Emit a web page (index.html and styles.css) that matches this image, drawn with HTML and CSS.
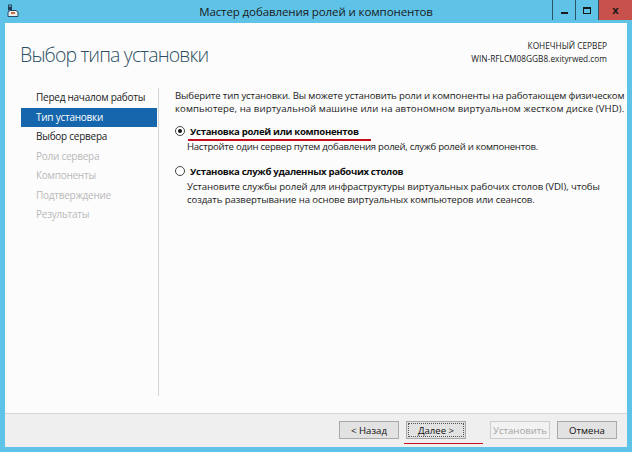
FILE: index.html
```html
<!DOCTYPE html>
<html lang="ru">
<head>
<meta charset="utf-8">
<title>Мастер добавления ролей и компонентов</title>
<link rel="stylesheet" href="styles.css">
</head>
<body>
<div class="window">
  <div class="titlebar">
    <svg class="app-icon" width="12" height="14" viewBox="0 0 12 14">
      <rect x="1" y="0.5" width="4" height="6" fill="#1e3e5a"/>
      <rect x="1.8" y="1.5" width="2.4" height="1" fill="#9fd6f0"/>
      <path d="M1 8 L3 6.5 H9 L11 8 V12.5 H1 Z" fill="#e8eef2" stroke="#2a4a66" stroke-width="1"/>
      <rect x="4" y="8" width="4" height="2" fill="#c86a3a"/>
    </svg>
    <div class="title">Мастер добавления ролей и компонентов</div>
    <div class="caption-buttons">
      <div class="cbtn cmin"><span class="min-glyph"></span></div>
      <div class="cbtn cmax"><span class="max-glyph"></span></div>
      <div class="cbtn cclose">x</div>
    </div>
  </div>
  <div class="client">
    <div class="main">
      <div class="header">
        <h1 class="page-title">Выбор типа установки</h1>
        <div class="server">
          <div class="server-label">КОНЕЧНЫЙ СЕРВЕР</div>
          <div class="server-name">WIN-RFLCM08GGB8.exityrwed.com</div>
        </div>
      </div>
      <div class="body">
        <ul class="nav">
          <li class="nav-item">Перед началом работы</li>
          <li class="nav-item active">Тип установки</li>
          <li class="nav-item">Выбор сервера</li>
          <li class="nav-item disabled">Роли сервера</li>
          <li class="nav-item disabled">Компоненты</li>
          <li class="nav-item disabled">Подтверждение</li>
          <li class="nav-item disabled">Результаты</li>
        </ul>
        <div class="content">
          <p class="intro"><span class="line i1">Выберите тип установки. Вы можете установить роли и компоненты на работающем физическом</span><span class="line i2">компьютере, на виртуальной машине или на автономном виртуальном жестком диске (VHD).</span></p>
          <div class="option">
            <div class="option-head"><span class="radio checked"></span><span class="option-label underlined">Установка ролей или компонентов</span></div>
            <p class="option-desc"><span class="line d1">Настройте один сервер путем добавления ролей, служб ролей и компонентов.</span></p>
          </div>
          <div class="option second">
            <div class="option-head"><span class="radio"></span><span class="option-label l2">Установка служб удаленных рабочих столов</span></div>
            <p class="option-desc"><span class="line d2">Установите службы ролей для инфраструктуры виртуальных рабочих столов (VDI), чтобы</span><span class="line d3">создать развертывание на основе виртуальных компьютеров или сеансов.</span></p>
          </div>
        </div>
      </div>
    </div>
    <div class="footer">
      <button class="btn">&lt; Назад</button>
      <button class="btn focused"><span class="focus-ring">Далее &gt;</span></button>
      <button class="btn disabled-btn">Установить</button>
      <button class="btn">Отмена</button>
    </div>
  </div>
</div>
</body>
</html>
```
FILE: styles.css
```css
* { box-sizing: border-box; }
html, body { margin: 0; padding: 0; }
body {
  width: 632px;
  height: 452px;
  background: #5fc3e8;
  font-family: "Open Sans", "Noto Sans", "DejaVu Sans", sans-serif;
  color: #1b1b1b;
  overflow: hidden;
}
.window {
  display: flex;
  flex-direction: column;
  height: 452px;
}
.titlebar {
  height: 23px;
  display: flex;
  align-items: flex-start;
  position: relative;
  flex: none;
}
.app-icon {
  margin: 4px 0 0 7px;
}
.title {
  position: absolute;
  left: 0;
  right: 0;
  top: 4px;
  text-align: center;
  font-size: 11.5px;
  color: #1a1a1a;
  letter-spacing: -0.1px;
}
.caption-buttons {
  margin-left: auto;
  display: flex;
  height: 20px;
}
.cbtn {
  height: 20px;
  display: flex;
  align-items: center;
  justify-content: center;
}
.cmin, .cmax {
  width: 23px;
  border-left: 1px solid #2b5468;
}
.cclose {
  width: 34px;
  background: #c9514b;
  border-left: 1px solid #2b5468;
  font-weight: 700;
  font-size: 11px;
  color: #1a1a1a;
  padding-bottom: 1px;
}
.min-glyph {
  width: 7px;
  height: 2px;
  background: #1a1a1a;
  margin-top: 5px;
}
.max-glyph {
  width: 8px;
  height: 7px;
  border: 1.5px solid #1a1a1a;
  border-top-width: 2px;
}
.client {
  flex: 1;
  margin: 0 5px 5px;
  background: #fcfcfc;
  display: flex;
  flex-direction: column;
}
.main {
  flex: 1;
  display: flex;
  flex-direction: column;
}
.header {
  height: 62px;
  display: flex;
  justify-content: space-between;
  padding: 0 20px 0 15px;
}
.page-title {
  margin: 18px 0 0;
  font-size: 19.5px;
  font-weight: 300;
  color: #2c4f63;
  letter-spacing: -0.85px;
}
.server {
  margin-top: 16px;
  text-align: right;
  font-size: 8.3px;
  line-height: 13px;
  color: #222;
}
.body {
  flex: 1;
  display: flex;
  padding-bottom: 17px;
}
.nav {
  list-style: none;
  margin: 3px 0 0 16px;
  padding: 0;
  width: 138px;
  flex: none;
  border-right: 1px solid #d5d5d5;
}
.nav-item {
  width: 136px;
  height: 19.5px;
  line-height: 19.5px;
  padding-left: 15px;
  font-size: 10px;
  color: #1b1b1b;
  letter-spacing: -0.25px;
}
.nav-item.active {
  background: #1566ad;
  color: #fff;
}
.nav-item.disabled { color: #b9b9b9; }
.content {
  flex: 1;
  padding: 4px 0 0 16px;
  font-size: 9.6px;
  line-height: 13px;
  white-space: nowrap;
}
.line { display: block; }
.i1 { letter-spacing: -0.13px; }
.i2 { letter-spacing: 0.1px; }
.d1 { letter-spacing: -0.27px; }
.d2 { letter-spacing: -0.08px; }
.d3 { letter-spacing: -0.1px; }
.intro {
  margin: 0;
}
.option {
  margin-top: 9px;
}
.option.second { margin-top: 11px; }
.option-head {
  display: flex;
  align-items: center;
  height: 14px;
}
.radio {
  width: 10px;
  height: 10px;
  border: 1px solid #444;
  border-radius: 50%;
  background: #fff;
  position: relative;
  margin-right: 5px;
  flex: none;
}
.radio.checked::after {
  content: "";
  position: absolute;
  left: 2px;
  top: 2px;
  width: 4px;
  height: 4px;
  border-radius: 50%;
  background: #111;
}
.option-label {
  font-weight: 700;
  color: #0d0d0d;
  letter-spacing: -0.32px;
}
.underlined {
  position: relative;
}
.underlined::after {
  content: "";
  position: absolute;
  left: -2px;
  right: -12px;
  bottom: -3px;
  height: 1.5px;
  background: #c4101e;
}
.option-desc {
  margin: 2px 0 0 12px;
}
.footer {
  flex: none;
  height: 34px;
  border-top: 1px solid #d6d6d6;
  background: #efefef;
  display: flex;
  justify-content: flex-end;
  align-items: flex-start;
  gap: 7px;
  padding: 7px 10px 0 0;
}
.btn {
  width: 60px;
  height: 18px;
  border: 1px solid #a9a9a9;
  background: #e2e2e2;
  font-family: inherit;
  font-size: 9.6px;
  color: #111;
  padding: 0;
  display: flex;
  align-items: center;
  justify-content: center;
  position: relative;
}
.btn.focused {
  padding: 1px;
}
.btn.focused::after {
  content: "";
  position: absolute;
  left: -3px;
  right: -18px;
  bottom: -6px;
  height: 1.5px;
  background: #c4101e;
}
.focus-ring {
  width: 100%;
  height: 100%;
  border: 1px dotted #555;
  display: flex;
  align-items: center;
  justify-content: center;
}
.disabled-btn {
  margin-left: 17px;
  color: #a3a3a3;
  border-color: #cdcdcd;
  background: #f2f2f2;
}
```
